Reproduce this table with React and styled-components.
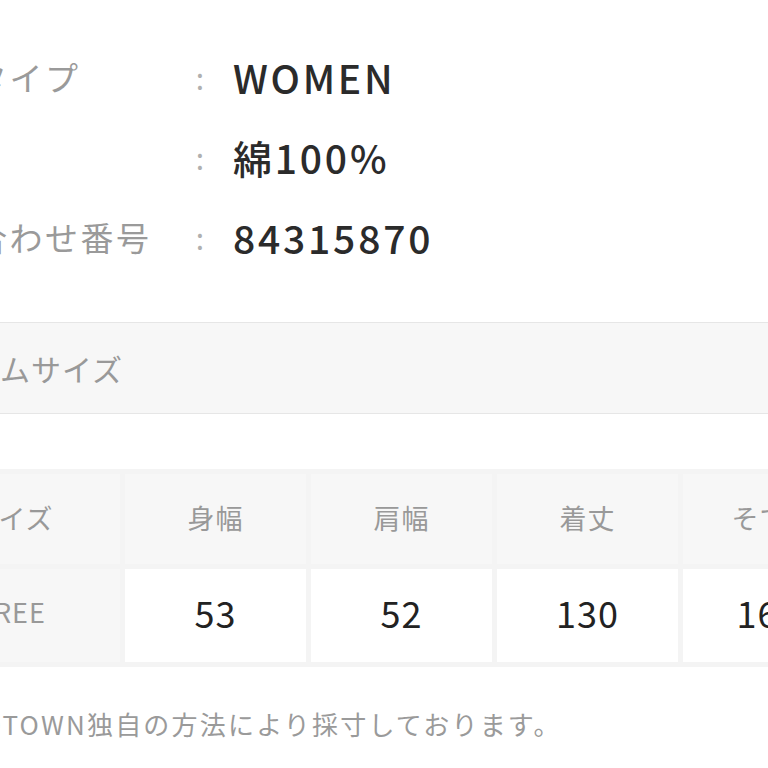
import React from 'react'
import styled, { createGlobalStyle } from 'styled-components'

const GlobalStyle = createGlobalStyle`
  html, body {
    margin: 0;
    padding: 0;
    background: #fff;
    overflow: hidden;
  }
  body {
    font-family: "Noto Sans CJK JP", "Noto Sans", sans-serif;
  }
`

const info = [
  { label: '性別タイプ', value: 'WOMEN' },
  { label: '素材', value: '綿100%' },
  { label: '問い合わせ番号', value: '84315870' },
]

const sizes = {
  head: ['サイズ', '身幅', '肩幅', '着丈', 'そで丈'],
  rows: [['FREE', '53', '52', '130', '16.5']],
}

export default function App() {
  return (
    <>
      <GlobalStyle />
      <Page>
        <InfoList>
          {info.map((item) => (
            <InfoRow key={item.label}>
              <Label>{item.label}</Label>
              <Colon>:</Colon>
              <Value>{item.value}</Value>
            </InfoRow>
          ))}
        </InfoList>

        <SectionTitle>アイテムサイズ</SectionTitle>

        <SizeTable>
          <thead>
            <tr>
              {sizes.head.map((h, i) => (
                <Th key={h} $first={i === 0}>{h}</Th>
              ))}
            </tr>
          </thead>
          <tbody>
            {sizes.rows.map((row) => (
              <tr key={row[0]}>
                {row.map((c, i) => (
                  <Td key={i} $first={i === 0}>{c}</Td>
                ))}
              </tr>
            ))}
          </tbody>
        </SizeTable>

        <Note>※サイズはZOZOTOWN独自の方法により採寸しております。</Note>
      </Page>
    </>
  )
}

const Page = styled.div`
  margin-left: -220px;
  width: 1200px;
  padding-top: 37px;
`

const InfoList = styled.div`
  display: flex;
  flex-direction: column;
  padding-left: 123px;
`

const InfoRow = styled.div`
  display: grid;
  grid-template-columns: 282px 30px 1fr;
  align-items: center;
  height: 80px;
`

const Label = styled.div`
  font-size: 33px;
  letter-spacing: 2.5px;
  color: #9a9a9a;
  white-space: nowrap;
`

const Colon = styled.div`
  font-size: 30px;
  color: #b0b0b0;
  text-align: center;
`

const Value = styled.div`
  padding-left: 18px;
  font-size: 39px;
  font-weight: 500;
  letter-spacing: 2.8px;
  color: #2b2b2b;
  white-space: nowrap;
`

const SectionTitle = styled.div`
  margin-top: 45px;
  height: 90px;
  display: flex;
  align-items: center;
  padding-left: 130px;
  background: #f7f7f7;
  border-top: 1px solid #e6e6e6;
  border-bottom: 1px solid #e6e6e6;
  font-size: 30px;
  letter-spacing: 1px;
  color: #999;
`

const SizeTable = styled.table`
  margin-top: 55px;
  margin-left: 119px;
  border-collapse: separate;
  border-spacing: 5px;
  background: #f4f4f4;
  table-layout: fixed;
`

const Th = styled.th`
  box-sizing: border-box;
  width: ${(p) => (p.$first ? '216px' : '181px')};
  height: 90px;
  padding: 0 0 4px;
  background: #f7f7f7;
  font-size: 27px;
  font-weight: 400;
  letter-spacing: 1px;
  color: #999;
  text-align: center;
`

const Td = styled.td`
  box-sizing: border-box;
  height: 93px;
  padding: 0 0 8px;
  background: ${(p) => (p.$first ? '#f7f7f7' : '#fff')};
  font-size: ${(p) => (p.$first ? '27px' : '36px')};
  letter-spacing: 1px;
  color: ${(p) => (p.$first ? '#999' : '#222')};
  text-align: center;
`

const Note = styled.p`
  margin: 38px 0 0;
  padding-left: 6px;
  font-size: 26px;
  letter-spacing: 2.2px;
  color: #9a9a9a;
  white-space: nowrap;
`
